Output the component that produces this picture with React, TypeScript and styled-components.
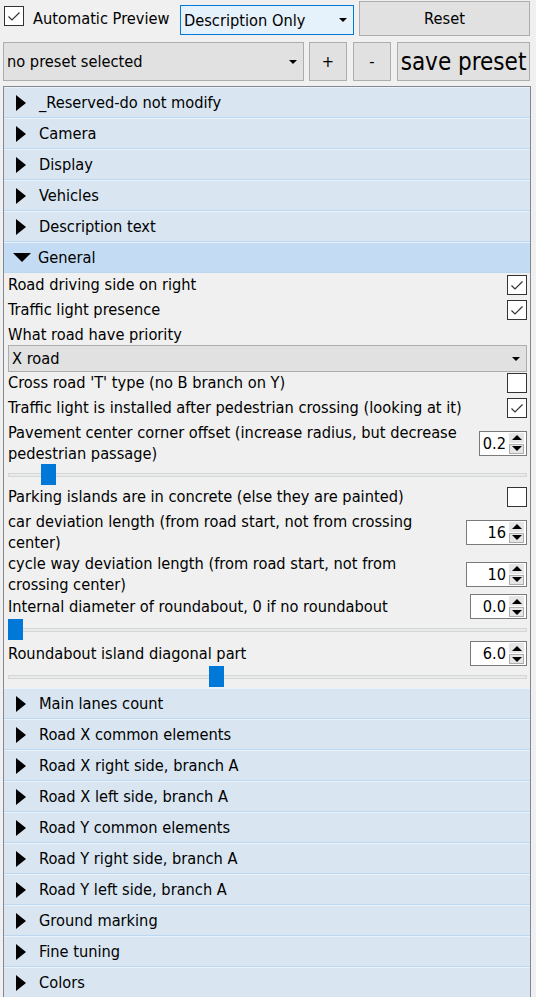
import React from "react";
import styled, { createGlobalStyle } from "styled-components";

const Global = createGlobalStyle`
  html, body { margin: 0; padding: 0; background: #f0f0f0; overflow: hidden; }
  body {
    font-family: "DejaVu Sans Condensed", "DejaVu Sans", sans-serif;
    font-size: 16.25px;
    color: #000;
  }
  #root { width: 536px; height: 997px; }
`;

const Page = styled.div`
  width: 536px;
  height: 997px;
  display: flex;
  flex-direction: column;
  overflow: hidden;
`;

const TopRow = styled.div`
  display: flex;
  align-items: flex-start;
  height: 41px;
  padding-left: 4px;
`;

const CheckLabel = styled.label`
  display: flex;
  align-items: flex-start;
  gap: 9px;
  width: 176px;
  margin-top: 6px;
  height: 22px;
  white-space: nowrap;
`;

const CheckText = styled.span`
  padding-top: 3px;
  line-height: 20px;
`;

const Box = styled.span<{ $size: number }>`
  width: ${(p) => p.$size}px;
  height: ${(p) => p.$size}px;
  box-sizing: border-box;
  border: 1px solid #333;
  background: #fff;
  display: flex;
  align-items: center;
  justify-content: center;
  flex: none;
`;

const Combo = styled.div<{ $focus?: boolean; $w?: number; $h: number; $mt?: number }>`
  box-sizing: border-box;
  ${(p) => (p.$w ? `width: ${p.$w}px;` : "align-self: stretch;")}
  flex: none;
  height: ${(p) => p.$h}px;
  margin-top: ${(p) => p.$mt ?? 0}px;
  border: 1px solid ${(p) => (p.$focus ? "#0078d7" : "#adadad")};
  background: ${(p) => (p.$focus ? "#e5f1fb" : "#e1e1e1")};
  display: flex;
  align-items: center;
  padding: 0 6px 0 3px;
  white-space: nowrap;
`;

const ComboText = styled.span`
  flex: 1;
`;

const DownArrow = styled.span`
  width: 0;
  height: 0;
  border-left: 4px solid transparent;
  border-right: 4px solid transparent;
  border-top: 4px solid #000;
`;

const Button = styled.button<{ $w: number; $h: number; $mt?: number; $ml: number; $fs?: number }>`
  box-sizing: border-box;
  width: ${(p) => p.$w}px;
  height: ${(p) => p.$h}px;
  margin-top: ${(p) => p.$mt ?? 0}px;
  margin-left: ${(p) => p.$ml}px;
  border: 1px solid #adadad;
  background: #e1e1e1;
  font-family: inherit;
  font-size: ${(p) => p.$fs ?? 16.25}px;
  color: #000;
  padding: 0;
  display: flex;
  align-items: center;
  justify-content: center;
  white-space: nowrap;
`;

const PresetRow = styled.div`
  display: flex;
  align-items: flex-start;
  height: 44px;
  padding-left: 3px;
  padding-top: 1px;
`;

const Panel = styled.div`
  margin-left: 3px;
  width: 528px;
  box-sizing: border-box;
  flex: 1;
  border: 1px solid #828790;
  border-bottom: none;
  display: flex;
  flex-direction: column;
  overflow: hidden;
`;

const Header = styled.div<{ $open?: boolean }>`
  flex: none;
  height: 31px;
  box-sizing: border-box;
  background: ${(p) => (p.$open ? "#c3dcf3" : "#d9e6f2")};
  border-top: 1px solid #eaf3fb;
  border-bottom: 1px solid #bcd8f1;
  display: flex;
  align-items: center;
  padding-left: ${(p) => (p.$open ? 9 : 12)}px;
  gap: ${(p) => (p.$open ? 7 : 13)}px;
  white-space: nowrap;
`;

const RightTri = styled.span`
  width: 0;
  height: 0;
  border-top: 8.5px solid transparent;
  border-bottom: 8.5px solid transparent;
  border-left: 10px solid #000;
`;

const DownTri = styled.span`
  width: 0;
  height: 0;
  border-left: 9px solid transparent;
  border-right: 9px solid transparent;
  border-top: 9px solid #000;
`;

const Content = styled.div`
  display: flex;
  flex-direction: column;
  padding: 1px 3px 1px 4px;
`;

const Row = styled.div<{ $mt: number; $h: number }>`
  display: flex;
  align-items: center;
  justify-content: space-between;
  margin-top: ${(p) => p.$mt}px;
  height: ${(p) => p.$h}px;
  flex: none;
  gap: 8px;
`;

const Label = styled.span`
  line-height: 21px;
`;

const Spin = styled.div<{ $w: number }>`
  box-sizing: border-box;
  width: ${(p) => p.$w}px;
  height: 25px;
  flex: none;
  border: 1px solid #7a7a7a;
  background: #fff;
  display: flex;
  align-items: center;
  padding: 1px 2px 1px 2px;
`;

const SpinValue = styled.span`
  flex: 1;
  text-align: right;
  padding-right: 3px;
`;

const SpinButtons = styled.div`
  display: flex;
  flex-direction: column;
  width: 15px;
  height: 100%;
  gap: 1px;
`;

const SpinBtn = styled.div<{ $down?: boolean }>`
  flex: 1;
  box-sizing: border-box;
  background: #e6e6e6;
  border: 1px solid ${(p) => (p.$down ? "#adadad" : "#e6e6e6")};
  display: flex;
  align-items: center;
  justify-content: center;
`;

const UpTri = styled.span`
  width: 0;
  height: 0;
  border-left: 5px solid transparent;
  border-right: 5px solid transparent;
  border-bottom: 5px solid #000;
`;

const SmallDown = styled.span`
  width: 0;
  height: 0;
  border-left: 5px solid transparent;
  border-right: 5px solid transparent;
  border-top: 5px solid #000;
`;

const SliderWrap = styled.div<{ $mt: number }>`
  position: relative;
  margin-top: ${(p) => p.$mt}px;
  height: 21px;
  flex: none;
  display: flex;
  align-items: center;
`;

const Groove = styled.div`
  flex: 1;
  height: 4px;
  box-sizing: border-box;
  background: #e7eaea;
  border: 1px solid #d6d6d6;
`;

const Handle = styled.div`
  position: absolute;
  top: 0;
  width: 15px;
  height: 21px;
  background: #0078d7;
`;

const Check = ({ checked, size = 20 }: { checked: boolean; size?: number }) => (
  <Box $size={size}>
    {checked && (
      <svg width={size - 2} height={size - 2} viewBox="0 0 18 18">
        <path d="M3.5 9.5 L7 13 L14.5 5.5" fill="none" stroke="#333" strokeWidth="1.2" />
      </svg>
    )}
  </Box>
);

const SpinBox = ({ value, w }: { value: string; w: number }) => (
  <Spin $w={w}>
    <SpinValue>{value}</SpinValue>
    <SpinButtons>
      <SpinBtn>
        <UpTri />
      </SpinBtn>
      <SpinBtn $down>
        <SmallDown />
      </SpinBtn>
    </SpinButtons>
  </Spin>
);

const Slider = ({ frac, mt }: { frac: number; mt: number }) => (
  <SliderWrap $mt={mt}>
    <Groove />
    <Handle style={{ left: `calc((100% - 15px) * ${frac})` }} />
  </SliderWrap>
);

const before = ["_Reserved-do not modify", "Camera", "Display", "Vehicles", "Description text"];
const after = [
  "Main lanes count",
  "Road X common elements",
  "Road X right side, branch A",
  "Road X left side, branch A",
  "Road Y common elements",
  "Road Y right side, branch A",
  "Road Y left side, branch A",
  "Ground marking",
  "Fine tuning",
  "Colors",
];

export default function App() {
  return (
    <Page>
      <Global />
      <TopRow>
        <CheckLabel>
          <Check checked size={20} />
          <CheckText>Automatic Preview</CheckText>
        </CheckLabel>
        <Combo $focus $w={174} $h={30} $mt={5}>
          <ComboText>Description Only</ComboText>
          <DownArrow />
        </Combo>
        <Button $w={171} $h={35} $mt={1} $ml={5}>
          Reset
        </Button>
      </TopRow>
      <PresetRow>
        <Combo $w={301} $h={39}>
          <ComboText>no preset selected</ComboText>
          <DownArrow />
        </Combo>
        <Button $w={38} $h={39} $ml={5}>
          +
        </Button>
        <Button $w={38} $h={39} $ml={6}>
          -
        </Button>
        <Button $w={133} $h={39} $ml={6} $fs={24}>
          save preset
        </Button>
      </PresetRow>
      <Panel>
        {before.map((t) => (
          <Header key={t}>
            <RightTri />
            <span>{t}</span>
          </Header>
        ))}
        <Header $open>
          <DownTri />
          <span>General</span>
        </Header>
        <Content>
          <Row $mt={0} $h={21}>
            <Label>Road driving side on right</Label>
            <Check checked />
          </Row>
          <Row $mt={4} $h={21}>
            <Label>Traffic light presence</Label>
            <Check checked />
          </Row>
          <Row $mt={4} $h={21}>
            <Label>What road have priority</Label>
          </Row>
          <Combo $h={27}>
            <ComboText>X road</ComboText>
            <DownArrow />
          </Combo>
          <Row $mt={0} $h={21}>
            <Label>Cross road 'T' type (no B branch on Y)</Label>
            <Check checked={false} />
          </Row>
          <Row $mt={4} $h={21}>
            <Label>Traffic light is installed after pedestrian crossing (looking at it)</Label>
            <Check checked />
          </Row>
          <Row $mt={4} $h={42}>
            <Label>Pavement center corner offset (increase radius, but decrease pedestrian passage)</Label>
            <SpinBox value="0.2" w={48} />
          </Row>
          <Slider frac={0.066} mt={0} />
          <Row $mt={1} $h={21}>
            <Label>Parking islands are in concrete (else they are painted)</Label>
            <Check checked={false} />
          </Row>
          <Row $mt={4} $h={42}>
            <Label>car deviation length (from road start, not from crossing center)</Label>
            <SpinBox value="16" w={61} />
          </Row>
          <Row $mt={0} $h={42}>
            <Label>cycle way deviation length (from road start, not from crossing center)</Label>
            <SpinBox value="10" w={61} />
          </Row>
          <Row $mt={0} $h={23}>
            <Label>Internal diameter of roundabout, 0 if no roundabout</Label>
            <SpinBox value="0.0" w={57} />
          </Row>
          <Slider frac={0} mt={1} />
          <Row $mt={2} $h={23}>
            <Label>Roundabout island diagonal part</Label>
            <SpinBox value="6.0" w={57} />
          </Row>
          <Slider frac={0.398} mt={1} />
        </Content>
        {after.map((t) => (
          <Header key={t}>
            <RightTri />
            <span>{t}</span>
          </Header>
        ))}
      </Panel>
    </Page>
  );
}
